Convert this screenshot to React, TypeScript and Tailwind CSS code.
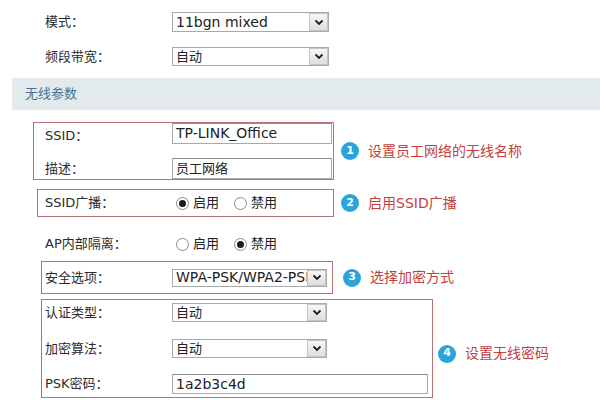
import React from 'react';

const font = { fontFamily: '"DejaVu Sans", "Noto Sans CJK SC", sans-serif' };

const Chevron = () => (
  <svg width="10" height="7" viewBox="0 0 10 7">
    <path d="M1.5 1.5 L5 5 L8.5 1.5" fill="none" stroke="#1f1f1f" strokeWidth="1.8" />
  </svg>
);

type SelectProps = { value: string; className: string; textClass?: string };

const Select = ({ value, className, textClass = 'text-[13px]' }: SelectProps) => (
  <div className={`flex items-stretch border border-[#a9a9a9] bg-white ${className}`}>
    <div
      className={`flex min-w-0 flex-1 items-center overflow-hidden whitespace-nowrap pl-[3px] text-[#222] ${textClass}`}
    >
      {value}
    </div>
    <div className="flex w-[19px] shrink-0 items-center justify-center border border-[#c4c4c4] bg-gradient-to-b from-[#f7f7f7] to-[#dedede]">
      <Chevron />
    </div>
  </div>
);

type InputProps = { value: string; className: string; textClass?: string };

const Input = ({ value, className, textClass = 'text-[13px]' }: InputProps) => (
  <div
    className={`flex items-center overflow-hidden whitespace-nowrap border border-[#a9a9a9] border-t-[#8f8f8f] bg-white pl-[3px] text-[#222] ${textClass} ${className}`}
  >
    {value}
  </div>
);

const Radio = ({ checked }: { checked?: boolean }) => (
  <span className="flex h-[13px] w-[13px] items-center justify-center rounded-full border border-[#8a8a8a] bg-white">
    {checked && <span className="h-[7px] w-[7px] rounded-full bg-[#1c1c1c]" />}
  </span>
);

const RadioPair = ({ first }: { first: boolean }) => (
  <div className="flex items-center text-[13px] text-[#222]">
    <Radio checked={first} />
    <span className="ml-[4px]">启用</span>
    <span className="ml-[15px]">
      <Radio checked={!first} />
    </span>
    <span className="ml-[4px]">禁用</span>
  </div>
);

type RowProps = { label: string; labelClass: string; rowClass: string; children: React.ReactNode };

const Row = ({ label, labelClass, rowClass, children }: RowProps) => (
  <div className={`flex items-center ${rowClass}`}>
    <div className={`shrink-0 text-[13px] text-[#2b2b2b] ${labelClass}`}>{label}</div>
    {children}
  </div>
);

const Note = ({ n, text, className }: { n: number; text: string; className: string }) => (
  <div className={`flex items-center ${className}`}>
    <span className="flex h-[18px] w-[18px] items-center justify-center rounded-full bg-[#2aa5dc] text-[11px] font-bold text-white">
      {n}
    </span>
    <span className="ml-[9px] text-[14px] text-[#c2413f]">{text}</span>
  </div>
);

export default function App() {
  return (
    <div className="h-[400px] w-[600px] overflow-hidden bg-white pt-[12px]" style={font}>
      <Row label="模式：" labelClass="w-[172px] pl-[45px]" rowClass="h-[20px]">
        <Select value="11bgn mixed" textClass="text-[14px]" className="h-[20px] w-[157px]" />
      </Row>
      <Row label="频段带宽：" labelClass="w-[172px] pl-[45px]" rowClass="mt-[15px] h-[19px]">
        <Select value="自动" className="h-[19px] w-[157px]" />
      </Row>

      <div className="ml-[12px] mt-[12px] flex h-[32px] items-center bg-[#e3eaee] pl-[13px] text-[13px] text-[#4a7290]">
        无线参数
      </div>

      <div className="mt-[12px] flex items-center">
        <div className="ml-[33px] w-[301px] border border-[#b27474]">
          <Row label="SSID：" labelClass="w-[138px] pl-[11px] pt-[5px]" rowClass="h-[21px]">
            <Input value="TP-LINK_Office" textClass="text-[14px]" className="h-[21px] w-[160px]" />
          </Row>
          <Row label="描述：" labelClass="w-[138px] pl-[11px]" rowClass="mt-[14px] h-[21px]">
            <Input value="员工网络" className="h-[21px] w-[160px]" />
          </Row>
        </div>
        <Note n={1} text="设置员工网络的无线名称" className="ml-[7px]" />
      </div>

      <div className="mt-[9px] flex items-center">
        <div className="ml-[37px] flex h-[28px] w-[297px] items-center border border-[#b27474]">
          <Row label="SSID广播：" labelClass="w-[134px] pl-[7px]" rowClass="h-full">
            <div className="ml-[4px]">
              <RadioPair first />
            </div>
          </Row>
        </div>
        <Note n={2} text="启用SSID广播" className="ml-[7px]" />
      </div>

      <Row label="AP内部隔离：" labelClass="w-[172px] pl-[45px]" rowClass="mt-[15px] h-[24px]">
        <div className="ml-[4px]">
          <RadioPair first={false} />
        </div>
      </Row>

      <div className="mt-[5px] flex items-center">
        <div className="ml-[41px] flex h-[33px] w-[292px] items-center border border-[#b27474]">
          <Row label="安全选项：" labelClass="w-[130px] pl-[3px]" rowClass="h-full">
            <Select value="WPA-PSK/WPA2-PSK" textClass="text-[14px]" className="h-[18px] w-[155px]" />
          </Row>
        </div>
        <Note n={3} text="选择加密方式" className="ml-[10px]" />
      </div>

      <div className="mt-[5px] flex items-center">
        <div className="ml-[41px] w-[392px] border border-[#b27474] pb-[3px] pt-[3px]">
          <Row label="认证类型：" labelClass="w-[130px] pl-[3px]" rowClass="h-[19px]">
            <Select value="自动" className="h-[19px] w-[155px]" />
          </Row>
          <Row label="加密算法：" labelClass="w-[130px] pl-[3px]" rowClass="mt-[17px] h-[19px]">
            <Select value="自动" className="h-[19px] w-[155px]" />
          </Row>
          <Row label="PSK密码：" labelClass="w-[130px] pl-[3px]" rowClass="mt-[16px] h-[20px]">
            <Input value="1a2b3c4d" textClass="text-[14px]" className="h-[20px] w-[256px]" />
          </Row>
        </div>
        <Note n={4} text="设置无线密码" className="ml-[5px] mt-[10px]" />
      </div>
    </div>
  );
}
